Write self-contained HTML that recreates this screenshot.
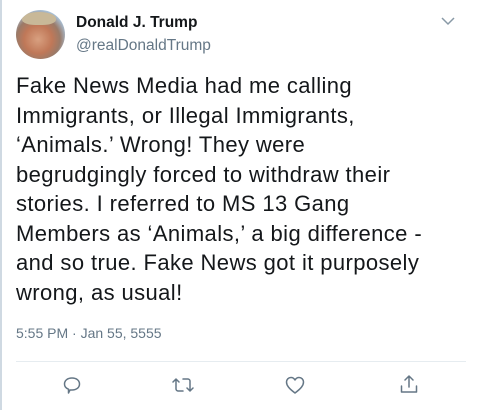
<!DOCTYPE html>
<html><head><style>
body{margin:0;width:480px;height:410px;background:#fff;font-family:"Liberation Sans",sans-serif;position:relative;overflow:hidden}
.lb{position:absolute;left:0;top:0;width:2px;height:410px;background:#cfd9e2}
.av{position:absolute;left:16px;top:10px;width:49px;height:49px;border-radius:50%;background:radial-gradient(circle at 45% 60%,#d8a080 0,#c07858 35%,#9a7a68 55%,#a9c4dc 75%,#c6def0 100%);overflow:hidden}
.hair{position:absolute;left:6px;top:2px;width:34px;height:13px;border-radius:50% 50% 40% 40%;background:#c8b898}
.name{position:absolute;left:76px;top:14px;font-weight:bold;font-size:15.5px;color:#14171a}
.handle{position:absolute;left:76px;top:37px;font-size:15.5px;color:#657786}
.txt{position:absolute;left:16px;top:71px;font-size:22px;letter-spacing:0.4px;line-height:29.5px;color:#14171a;white-space:nowrap}
.time{position:absolute;left:16px;top:325px;font-size:14px;color:#657786}
.div{position:absolute;left:16px;right:14px;top:361px;height:1px;background:#e6ecf0}
svg{position:absolute}
</style></head><body>
<div class="lb"></div>
<div class="av"><div class="hair"></div></div>
<div class="name">Donald J. Trump</div>
<div class="handle">@realDonaldTrump</div>
<svg style="left:441px;top:16px" width="14" height="10" viewBox="0 0 14 10"><path d="M1 2 L7 8 L13 2" fill="none" stroke="#8899a6" stroke-width="1.5"/></svg>
<div class="txt">Fake News Media had me calling<br>Immigrants, or Illegal Immigrants,<br>‘Animals.’ Wrong! They were<br>begrudgingly forced to withdraw their<br>stories. I referred to MS 13 Gang<br>Members as ‘Animals,’ a big difference -<br>and so true. Fake News got it purposely<br>wrong, as usual!</div>
<div class="time">5:55 PM · Jan 55, 5555</div>
<div class="div"></div>
<svg style="left:61px;top:374px" width="22" height="22" viewBox="0 0 22 22"><path d="M9 16 H11 C15.5 16 18.5 13.5 18.5 10 C18.5 6.5 15.5 4 11 4 C6.5 4 3.5 6.5 3.5 10 C3.5 12.5 5 14.3 7.5 15.2 L7.5 19 Z" fill="none" stroke="#657786" stroke-width="1.5" stroke-linejoin="round"/></svg>
<svg style="left:171px;top:374px" width="24" height="22" viewBox="0 0 24 22"><path d="M2 8 L5 5 L8 8 M5 5 V15 C5 16 6 17 7 17 H12 M22 14 L19 17 L16 14 M19 17 V7 C19 6 18 5 17 5 H12" fill="none" stroke="#657786" stroke-width="1.5" stroke-linejoin="round" stroke-linecap="round"/></svg>
<svg style="left:284px;top:374px" width="22" height="22" viewBox="0 0 22 22"><path d="M11 19 C5 14.5 2.5 11.5 2.5 8 C2.5 5.5 4.5 3.5 7 3.5 C8.8 3.5 10.2 4.6 11 6 C11.8 4.6 13.2 3.5 15 3.5 C17.5 3.5 19.5 5.5 19.5 8 C19.5 11.5 17 14.5 11 19 Z" fill="none" stroke="#657786" stroke-width="1.5" stroke-linejoin="round"/></svg>
<svg style="left:398px;top:373px" width="22" height="22" viewBox="0 0 22 22"><path d="M11 3 V14 M7 7 L11 3 L15 7 M3.5 13 V19 H18.5 V13" fill="none" stroke="#657786" stroke-width="1.5" stroke-linejoin="round" stroke-linecap="round"/></svg>
</body></html>
